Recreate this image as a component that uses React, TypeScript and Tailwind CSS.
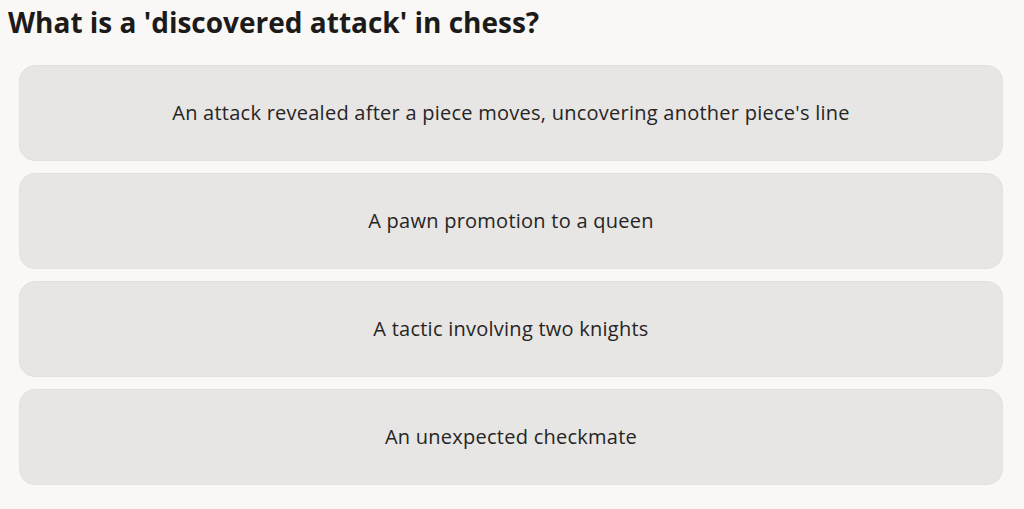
const options = [
  "An attack revealed after a piece moves, uncovering another piece's line",
  "A pawn promotion to a queen",
  "A tactic involving two knights",
  "An unexpected checkmate",
];

export default function App() {
  return (
    <div className="min-h-[509px] w-full bg-[#f9f8f6] font-['Open_Sans',sans-serif] text-[#1f1e1d]">
      <h1 className="px-2 pt-[4px] text-[28px] font-bold leading-[37px] tracking-[0px] text-[#1c1b1a]">
        What is a 'discovered attack' in chess?
      </h1>
      <div className="mt-6 flex flex-col gap-3 pl-[19px] pr-[21px]">
        {options.map((opt) => (
          <button
            key={opt}
            className="flex h-24 w-full items-center justify-center rounded-2xl border border-[#e2e1df] bg-[#e7e6e4] text-[20px] tracking-[0.25px] text-[#262524]"
          >
            {opt}
          </button>
        ))}
      </div>
    </div>
  );
}
